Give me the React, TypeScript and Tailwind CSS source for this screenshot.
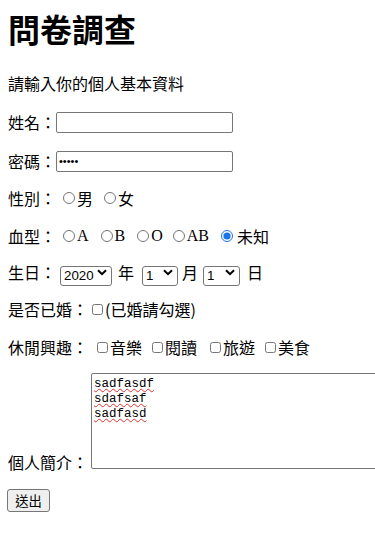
import React from "react";

const serif = "font-['Liberation_Serif','Noto_Sans_CJK_TC',serif]";

const Radio: React.FC<{ name: string; checked?: boolean; className?: string }> = ({
  name,
  checked = false,
  className = "",
}) => (
  <input
    type="radio"
    name={name}
    defaultChecked={checked}
    className={`w-[12px] h-[12px] m-0 mr-[2px] accent-[#1a73e8] ${className}`}
  />
);

const Check: React.FC<{ className?: string }> = ({ className = "" }) => (
  <input
    type="checkbox"
    className={`w-[11px] h-[11px] m-0 mr-[2px] ${className}`}
  />
);

const Select: React.FC<{ value: string; options: string[]; width: string }> = ({
  value,
  options,
  width,
}) => (
  <div className={`relative ${width} h-[20px]`}>
    <select
      defaultValue={value}
      className="appearance-none w-full h-full border border-[#767676] rounded-[3px] bg-white text-[13.33px] leading-[18px] font-['Liberation_Sans',sans-serif] text-black pl-[3px]"
    >
      {options.map((o) => (
        <option key={o} value={o}>
          {o}
        </option>
      ))}
    </select>
    <svg
      className="absolute right-[5px] top-[7px] pointer-events-none"
      width="10"
      height="7"
      viewBox="0 0 10 7"
    >
      <path d="M1 1.2 L5 5.2 L9 1.2" fill="none" stroke="#000" strokeWidth="2" />
    </svg>
  </div>
);

const words = ["sadfasdf", "sdafsaf", "sadfasd"];

export default function App() {
  const years = ["2018", "2019", "2020", "2021"];
  const months = Array.from({ length: 12 }, (_, i) => String(i + 1));
  const days = Array.from({ length: 31 }, (_, i) => String(i + 1));

  return (
    <div className="w-[375px] h-[559px] overflow-hidden bg-white text-black font-['Noto_Sans_CJK_TC',sans-serif] text-[16px] leading-[22px] px-2">
      <form onSubmit={(e) => e.preventDefault()}>
        <h1 className="pt-[12px] text-[32px] leading-[32px] font-bold">問卷調查</h1>

        <p className="mt-[28px]">請輸入你的個人基本資料</p>

        <div className="mt-[17px] flex items-center h-[22px]">
          <span>姓名：</span>
          <input
            type="text"
            className="w-[177px] h-[21px] border border-[#767676] rounded-[2px] px-[2px] text-[13.33px]"
          />
        </div>

        <div className="mt-[17px] flex items-center h-[22px]">
          <span>密碼：</span>
          <input
            type="password"
            defaultValue="12345"
            className="w-[177px] h-[21px] border border-[#767676] rounded-[2px] px-[2px] text-[11px] font-['Liberation_Sans',sans-serif]"
          />
        </div>

        <div className="mt-[15px] flex items-center h-[22px]">
          <span>性別：</span>
          <Radio name="sex" className="ml-[7px]" />
          <span>男</span>
          <Radio name="sex" className="ml-[11px]" />
          <span>女</span>
        </div>

        <div className="mt-[16px] flex items-center h-[22px]">
          <span>血型：</span>
          <Radio name="blood" className="ml-[7px]" />
          <span className={serif}>A</span>
          <Radio name="blood" className="ml-[12px]" />
          <span className={serif}>B</span>
          <Radio name="blood" className="ml-[12px]" />
          <span className={serif}>O</span>
          <Radio name="blood" className="ml-[10px]" />
          <span className={serif}>AB</span>
          <Radio name="blood" checked className="ml-[12px]" />
          <span className="ml-[2px]">未知</span>
        </div>

        <div className="mt-[14px] flex items-center h-[22px]">
          <span>生日：</span>
          <span className="ml-[4px]" />
          <Select value="2020" options={years} width="w-[52px]" />
          <span className="ml-[6px]">年</span>
          <span className="ml-[8px]" />
          <Select value="1" options={months} width="w-[36px]" />
          <span className="ml-[4px]">月</span>
          <span className="ml-[5px]" />
          <Select value="1" options={days} width="w-[37px]" />
          <span className="ml-[7px]">日</span>
        </div>

        <div className="mt-[15px] flex items-center h-[22px]">
          <span>是否已婚：</span>
          <Check className="ml-[4px]" />
          <span>(已婚請勾選)</span>
        </div>

        <div className="mt-[16px] flex items-center h-[22px]">
          <span>休閒興趣：</span>
          <Check className="ml-[9px]" />
          <span>音樂</span>
          <Check className="ml-[10px]" />
          <span>閱讀</span>
          <Check className="ml-[13px]" />
          <span>旅遊</span>
          <Check className="ml-[10px]" />
          <span>美食</span>
        </div>

        <div className="mt-[15px] flex items-end">
          <span className="shrink-0 mb-[-4px]">個人簡介：</span>
          <div
            role="textbox"
            className="ml-[3px] shrink-0 w-[300px] h-[96px] border border-[#767676] rounded-[2px] px-[2px] pt-[3px] font-['Liberation_Mono',monospace] text-[12.5px] leading-[15px]"
          >
            {words.map((w) => (
              <div key={w}>
                <span className="underline decoration-wavy decoration-[#e03131] decoration-1 underline-offset-[1px]">
                  {w}
                </span>
              </div>
            ))}
          </div>
        </div>

        <button
          type="submit"
          className="mt-[20px] ml-[-1px] w-[43px] h-[23px] border border-[#767676] rounded-[3px] bg-[#efefef] text-[13.33px] leading-[18px]"
        >
          送出
        </button>
      </form>
    </div>
  );
}
